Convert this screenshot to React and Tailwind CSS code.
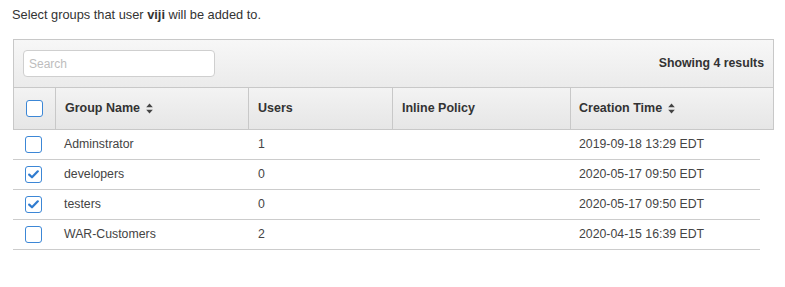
import React, { useState } from 'react';

const groups = [
  { name: 'Adminstrator', users: 1, created: '2019-09-18 13:29 EDT', checked: false },
  { name: 'developers', users: 0, created: '2020-05-17 09:50 EDT', checked: true },
  { name: 'testers', users: 0, created: '2020-05-17 09:50 EDT', checked: true },
  { name: 'WAR-Customers', users: 2, created: '2020-04-15 16:39 EDT', checked: false },
];

function SortIcon() {
  return (
    <svg width="7" height="11" viewBox="0 0 7 11" className="ml-[6px] inline-block">
      <path d="M3.5 0.5 L6.8 4.3 H0.2 Z" fill="#444" />
      <path d="M3.5 10.5 L6.8 6.7 H0.2 Z" fill="#444" />
    </svg>
  );
}

function Checkbox({ checked, onChange }) {
  return (
    <button
      onClick={onChange}
      className="w-[17px] h-[17px] rounded-[3px] border-[1.5px] border-[#3c87d6] bg-white flex items-center justify-center"
    >
      {checked && (
        <svg width="11" height="9" viewBox="0 0 11 9">
          <path d="M1.2 4.6 L4 7.3 L9.8 1.3" stroke="#2f7bd0" strokeWidth="2.2" fill="none" strokeLinecap="round" strokeLinejoin="round" />
        </svg>
      )}
    </button>
  );
}

export default function App() {
  const [rows, setRows] = useState(groups);
  const [search, setSearch] = useState('');

  const toggle = (i) => setRows(rows.map((r, j) => (j === i ? { ...r, checked: !r.checked } : r)));

  return (
    <div className="w-[785px] h-[287px] bg-white font-['Liberation_Sans',Arial,sans-serif] text-[12.3px] text-[#444]">
      <p className="pl-[12px] pt-[7px] text-[12.8px] text-[#333] leading-[16px]">
        Select groups that user <b>viji</b> will be added to.
      </p>

      <div className="ml-[13px] mt-[16px] w-[761px]">
        <div className="border border-[#c8c8c8] bg-gradient-to-b from-[#f7f7f7] to-[#ebebeb] h-[49px] flex items-center justify-between pl-[9px] pr-[9px]">
          <input
            className="w-[192px] h-[27px] rounded-[4px] border border-[#cfcfcf] bg-white px-[5px] text-[12px] outline-none placeholder:text-[#bdbdbd]"
            placeholder="Search"
            value={search}
            onChange={(e) => setSearch(e.target.value)}
          />
          <span className="font-bold text-[#333]">Showing 4 results</span>
        </div>

        <div className="flex h-[42px] border-x border-b border-[#c8c8c8] bg-gradient-to-b from-[#f3f3f3] to-[#e6e6e6] font-bold text-[12.5px] text-[#333]">
          <div className="w-[42px] flex items-center pl-[12px] border-r border-[#c8c8c8]">
            <Checkbox checked={false} onChange={() => {}} />
          </div>
          <div className="w-[193px] flex items-center pl-[9px] border-r border-[#c8c8c8]">
            Group Name <SortIcon />
          </div>
          <div className="w-[144px] flex items-center pl-[9px] border-r border-[#c8c8c8]">Users</div>
          <div className="w-[178px] flex items-center pl-[9px] border-r border-[#c8c8c8]">Inline Policy</div>
          <div className="flex-1 flex items-center pl-[8px]">
            Creation Time <SortIcon />
          </div>
        </div>

        <div className="w-[747px]">
          {rows.map((r, i) => (
            <div key={r.name} className="flex h-[30px] items-center border-b border-[#cccccc]">
              <div className="w-[43px] pl-[12px] flex items-center">
                <Checkbox checked={r.checked} onChange={() => toggle(i)} />
              </div>
              <div className="w-[193px] pl-[8px]">{r.name}</div>
              <div className="w-[144px] pl-[9px]">{r.users}</div>
              <div className="w-[178px]"></div>
              <div className="flex-1 pl-[8px]">{r.created}</div>
            </div>
          ))}
        </div>
      </div>
    </div>
  );
}
